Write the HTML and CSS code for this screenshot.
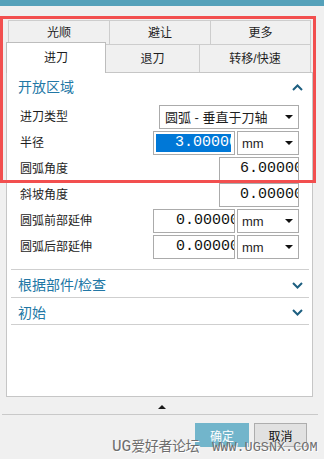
FILE: index.html
```html
<!DOCTYPE html>
<html lang="zh-CN">

<head>
    <meta charset="UTF-8">
    <meta name="viewport" content="width=device-width, initial-scale=1.0">
    <title>非切削移动</title>
    <link rel="stylesheet" href="styles.css">
</head>

<body>
    <div class="titlebar"></div>

    <div class="tabs">
        <div class="tab-row row-top">
            <div class="tab tab-first" style="width: 102px">光顺</div>
            <div class="tab" style="width: 101px">避让</div>
            <div class="tab" style="width: 100px">更多</div>
        </div>
        <div class="tab-row row-bottom">
            <div class="tab tab-first active" style="width: 100px">进刀</div>
            <div class="tab" style="width: 94px">退刀</div>
            <div class="tab" style="width: 111px">转移/快速</div>
        </div>
    </div>

    <div class="panel">
        <div class="section open">
            <div class="section-head">
                <span>开放区域</span>
                <svg class="chevron" width="11" height="7" viewBox="0 0 11 7">
                    <polyline points="1,6 5.5,1.5 10,6" />
                </svg>
            </div>
            <div class="form">
                <div class="row">
                    <span class="label">进刀类型</span>
                    <div class="select wide">
                        <span>圆弧 - 垂直于刀轴</span>
                        <i class="caret"></i>
                    </div>
                </div>
                <div class="row">
                    <span class="label">半径</span>
                    <div class="num mid selected">
                        <div class="sel"><span>3.00000</span></div>
                    </div>
                    <div class="select unit">
                        <span>mm</span>
                        <i class="caret"></i>
                    </div>
                </div>
                <div class="row">
                    <span class="label">圆弧角度</span>
                    <div class="num short"><span>6.00000</span></div>
                </div>
                <div class="row">
                    <span class="label">斜坡角度</span>
                    <div class="num short"><span>0.00000</span></div>
                </div>
                <div class="row">
                    <span class="label">圆弧前部延伸</span>
                    <div class="num mid"><span>0.00000</span></div>
                    <div class="select unit">
                        <span>mm</span>
                        <i class="caret"></i>
                    </div>
                </div>
                <div class="row">
                    <span class="label">圆弧后部延伸</span>
                    <div class="num mid"><span>0.00000</span></div>
                    <div class="select unit">
                        <span>mm</span>
                        <i class="caret"></i>
                    </div>
                </div>
            </div>
        </div>

        <div class="section closed">
            <div class="section-head">
                <span>根据部件/检查</span>
                <svg class="chevron" width="11" height="7" viewBox="0 0 11 7">
                    <polyline points="1,1 5.5,5.5 10,1" />
                </svg>
            </div>
        </div>

        <div class="section closed last">
            <div class="section-head">
                <span>初始</span>
                <svg class="chevron" width="11" height="7" viewBox="0 0 11 7">
                    <polyline points="1,1 5.5,5.5 10,1" />
                </svg>
            </div>
        </div>
    </div>

    <div class="expander"><i class="up"></i></div>

    <div class="footer">
        <button class="btn btn-ok">确定</button>
        <button class="btn btn-cancel">取消</button>
    </div>

    <div class="annotation"></div>
    <div class="watermark">
        <span class="wm-cn"><span class="wm-ug">UG</span>爱好者论坛</span>
        <span class="wm-en">WWW.UGSNX.COM</span>
    </div>
</body>

</html>
```

FILE: styles.css
```css
body {
    margin: 0;
    width: 324px;
    height: 459px;
    position: relative;
    overflow: hidden;
    background: #f0f0f0;
    font-family: "Liberation Sans", "Noto Sans CJK SC", sans-serif;
    font-size: 12px;
    color: #1e1e1e;
}

.titlebar {
    height: 6px;
    background: #55a1ba;
}

/* tabs */

.tabs {
    margin-top: 14px;
}

.tab-row {
    display: flex;
    align-items: flex-end;
}

.row-top {
    height: 24px;
    padding-left: 8px;
}

.row-bottom {
    height: 28px;
    padding-left: 6px;
}

.tab {
    box-sizing: border-box;
    height: 100%;
    display: flex;
    align-items: center;
    justify-content: center;
    border-top: 1px solid #cdcdcd;
    border-right: 1px solid #cdcdcd;
    line-height: 14px;
}

.tab-first {
    border-left: 1px solid #cdcdcd;
}

.tab.active {
    position: relative;
    z-index: 1;
    height: 31px;
    margin-bottom: -1px;
    background: #fff;
    border-color: #bdbdbd;
}

/* panel */

.panel {
    box-sizing: border-box;
    width: 307px;
    height: 325px;
    margin-left: 6px;
    padding: 0 3px 0 4px;
    background: #fff;
    border: 1px solid #c6c6c6;
}

.section {
    border-bottom: 1px solid #cfcfcf;
}

.section-head {
    display: flex;
    align-items: center;
    justify-content: space-between;
    padding: 0 6px 0 7px;
    font-size: 14px;
    line-height: 16px;
    color: #2277a5;
}

.open .section-head {
    height: 28px;
}

.closed .section-head {
    height: 27px;
    box-sizing: border-box;
    padding-top: 3px;
}

.last .section-head {
    height: 26px;
}

.chevron polyline {
    fill: none;
    stroke: #1d5f80;
    stroke-width: 2;
}

.form {
    display: flex;
    flex-direction: column;
    gap: 2px;
    padding: 4px 10px 10px 9px;
}

.row {
    display: flex;
    align-items: center;
    height: 24px;
}

.label {
    flex: 1;
    line-height: 14px;
}

.select {
    box-sizing: border-box;
    height: 24px;
    display: flex;
    align-items: center;
    justify-content: space-between;
    padding: 0 5px 0 5px;
    background: #fff;
    border: 1px solid #ababab;
    font-size: 13px;
    line-height: 15px;
}

.select.wide {
    width: 140px;
}

.select.unit {
    width: 62px;
    margin-left: 2px;
    padding-left: 4px;
}

.caret {
    width: 0;
    height: 0;
    border-left: 4px solid transparent;
    border-right: 4px solid transparent;
    border-top: 4px solid #111;
}

.num {
    box-sizing: border-box;
    height: 24px;
    display: flex;
    align-items: center;
    justify-content: flex-end;
    overflow: hidden;
    padding: 0 2px;
    background: #fff;
    border: 1px solid #ababab;
    font-family: "Liberation Mono", monospace;
    font-size: 15px;
    line-height: 18px;
    color: #111;
}

.num span {
    flex-shrink: 0;
    margin-right: -7px;
}

.num.mid {
    width: 82px;
}

.num.short {
    width: 80px;
}

.num.selected {
    padding: 0 3px 0 2px;
}

.sel {
    flex: 1;
    height: 18px;
    display: flex;
    justify-content: flex-end;
    overflow: hidden;
    background: #0078d7;
    color: #fff;
}

/* bottom */

.expander {
    box-sizing: border-box;
    height: 17px;
    padding-top: 8px;
    display: flex;
    justify-content: center;
}

.up {
    width: 0;
    height: 0;
    border-left: 4.5px solid transparent;
    border-right: 4.5px solid transparent;
    border-bottom: 4px solid #1a1a1a;
}

.footer {
    display: flex;
    justify-content: flex-end;
    gap: 5px;
    margin: 0 6px 0 2px;
    padding: 8px 11px 0 0;
    border-top: 1px solid #c9c9c9;
}

.btn {
    box-sizing: border-box;
    height: 24px;
    padding: 0;
    font-family: "Liberation Sans", "Noto Sans CJK SC", sans-serif;
    font-size: 12px;
    border: 1px solid;
}

.btn-ok {
    width: 54px;
    background: #72b5cb;
    border-color: #72b5cb;
    color: #fff;
}

.btn-cancel {
    width: 53px;
    background: #e1e1e1;
    border-color: #adadad;
    color: #111;
}

/* overlays */

.annotation {
    position: absolute;
    left: 0;
    top: 16px;
    width: 316px;
    height: 167px;
    box-sizing: border-box;
    border: 3px solid #f24f4f;
    pointer-events: none;
}

.watermark {
    position: absolute;
    left: 112px;
    top: 437px;
    display: flex;
    align-items: baseline;
    gap: 13px;
    white-space: nowrap;
    color: #6e6e6e;
    text-shadow: 1px 1px 0 #fff;
    line-height: 16px;
}

.wm-cn {
    font-family: "Noto Sans CJK SC", sans-serif;
    font-size: 14px;
    letter-spacing: -0.4px;
}

.wm-ug {
    font-family: "Liberation Mono", monospace;
    font-size: 16px;
    letter-spacing: 0;
}

.wm-en {
    font-family: "Liberation Mono", monospace;
    font-size: 13.5px;
}
```
